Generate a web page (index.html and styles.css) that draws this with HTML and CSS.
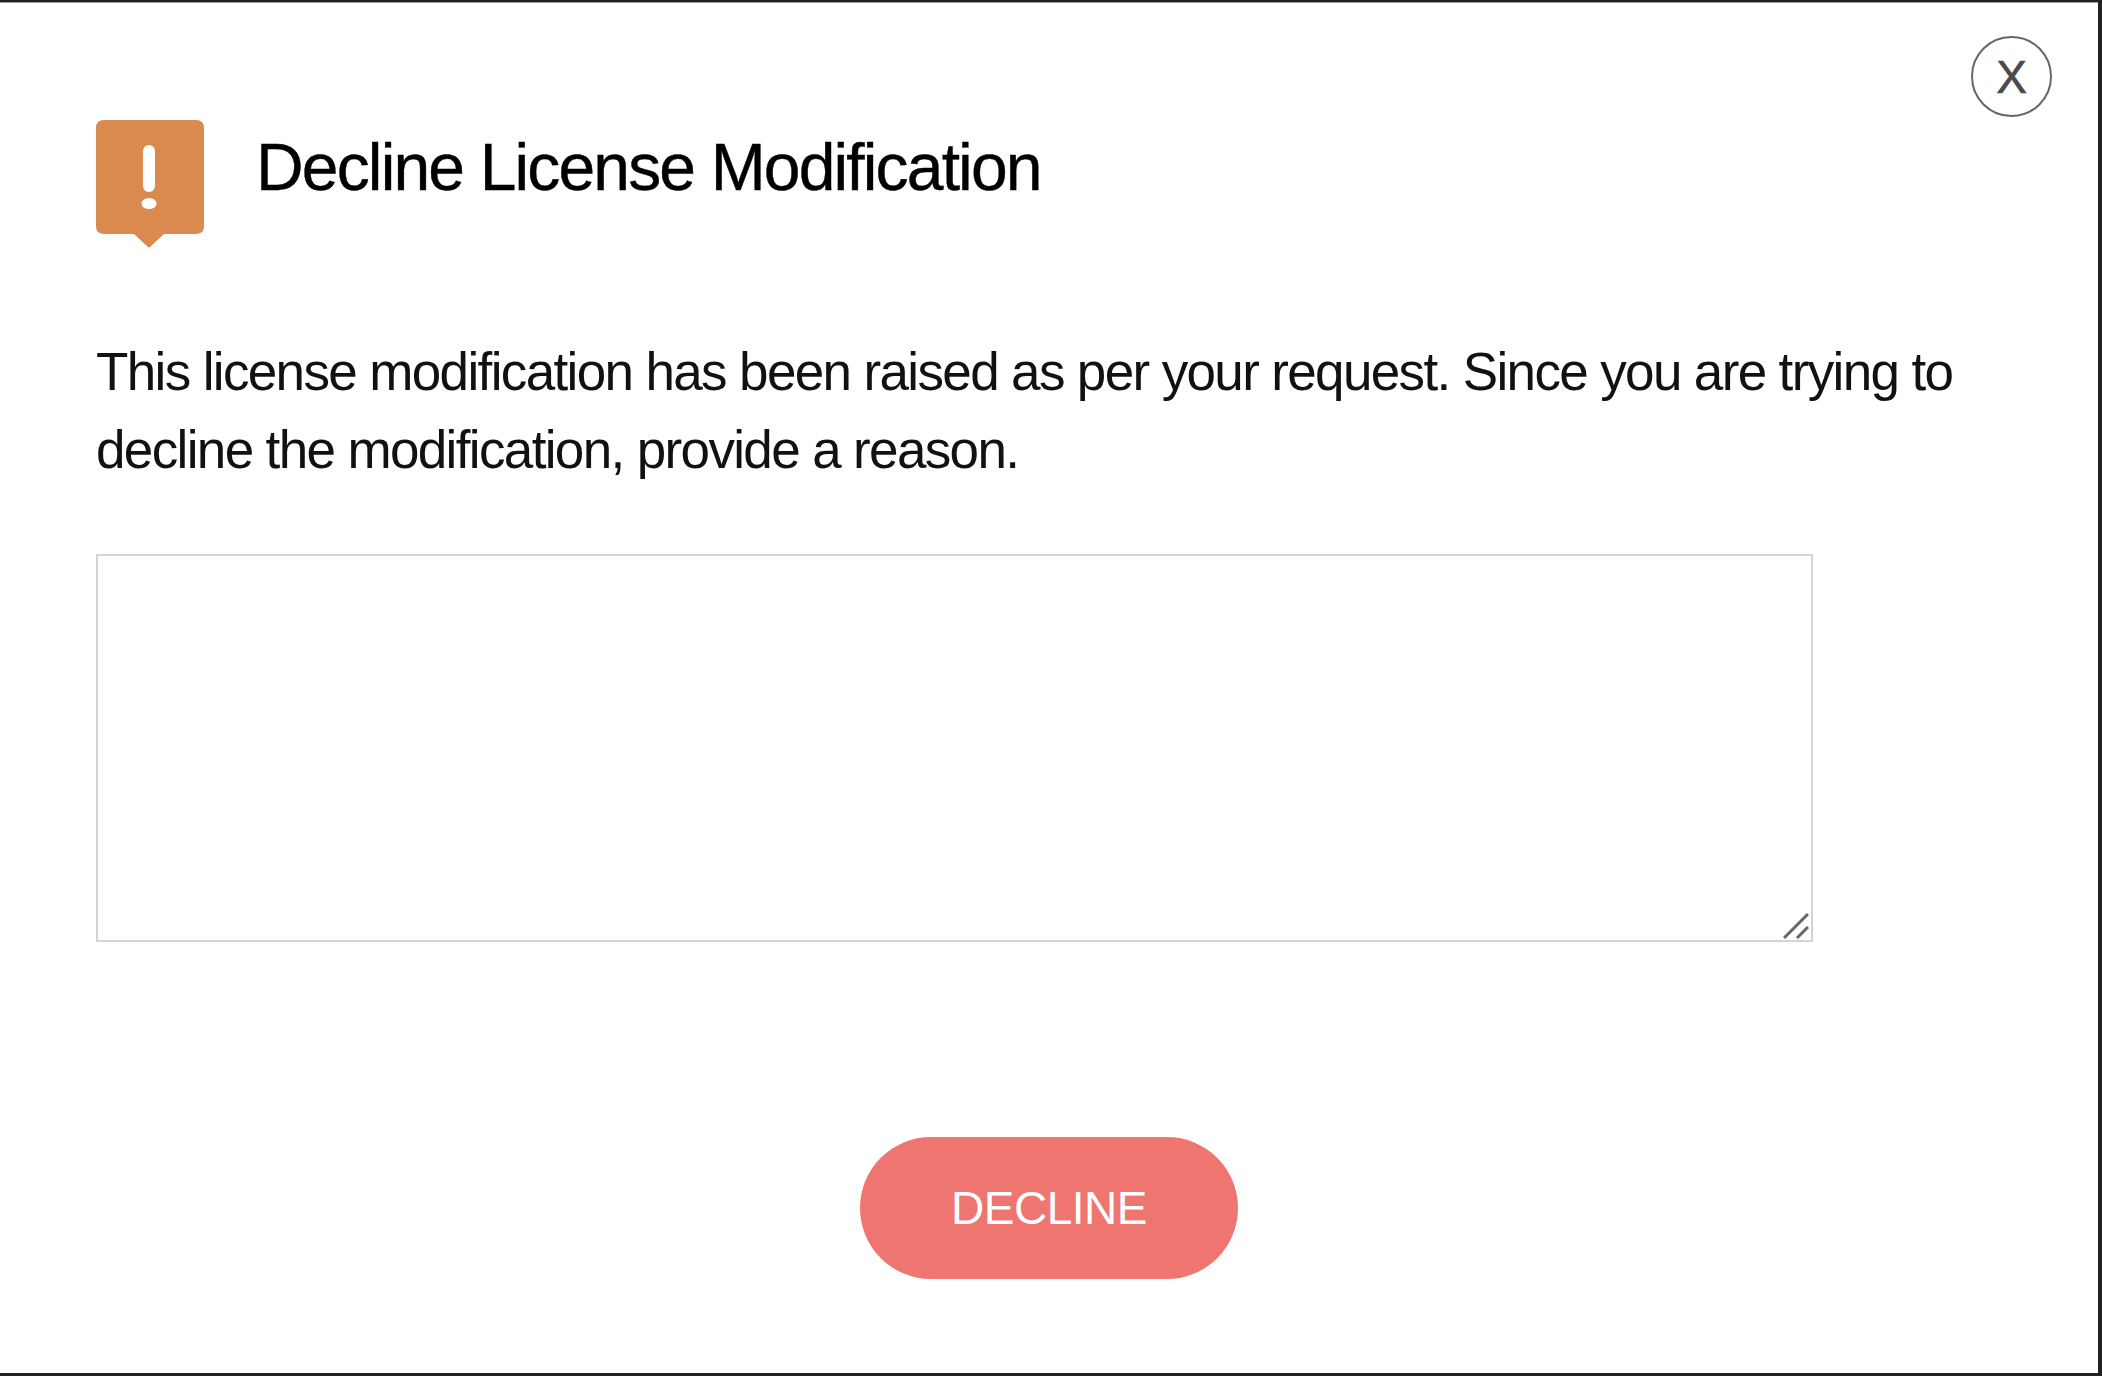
FILE: index.html
```html
<!DOCTYPE html>
<html lang="en">
<head>
	<meta charset="UTF-8">
	<title>Decline License Modification</title>
	<link rel="stylesheet" href="styles.css">
</head>
<body>
	<div class="modal">
		<button class="close" type="button">X</button>
		<div class="head">
			<svg class="alert" width="108" height="128" viewBox="0 0 108 128">
				<path d="M8 0H100Q108 0 108 8V106Q108 114 100 114H68L54 127Q53 128 52 127L38 114H8Q0 114 0 106V8Q0 0 8 0Z" fill="#da8a4e"/>
				<rect x="47" y="25" width="12" height="47" rx="6" fill="#fff"/>
				<ellipse cx="53" cy="83.500" rx="7.500" ry="5.500" fill="#fff"/>
			</svg>
			<h3>Decline License Modification</h3>
		</div>
		<p class="msg">This license modification has been raised as per your request. Since you are trying to decline the modification, provide a reason.</p>
		<div class="reason-box">
			<textarea class="reason"></textarea>
			<svg class="grip" width="26" height="26" viewBox="0 0 26 26">
				<path d="M1 25L25 1M14 25L25 14" stroke="#666" stroke-width="3" fill="none"/>
			</svg>
		</div>
		<div class="actions">
			<button class="decline" type="button">DECLINE</button>
		</div>
	</div>
</body>
</html>
```

FILE: styles.css
```css
html,body{margin:0;padding:0;}
body{
	width:2102px;
	height:1376px;
	overflow:hidden;
	background:#222;
	font-family:"Liberation Sans",Arial,sans-serif;
}
.modal{
	position:relative;
	box-sizing:border-box;
	width:2098px;
	height:1371px;
	margin-top:2px;
	padding:117px 96px 0;
	border-top:1px solid #999;
	background:#fff;
}
.close{
	position:absolute;
	top:33px;
	left:1971px;
	width:81px;
	height:81px;
	padding:0;
	border:2px solid #666;
	border-radius:50%;
	background:#fff;
	color:#4a4a4a;
	font:46px "Liberation Sans",Arial,sans-serif;
	-webkit-text-stroke:.6px #4a4a4a;
}
.head{
	display:flex;
	align-items:flex-start;
	gap:52px;
}
.alert{
	display:block;
	flex:none;
}
h3{
	margin:9px 0 0;
	font-size:66px;
	line-height:76px;
	font-weight:400;
	color:#000;
	letter-spacing:-1.85px;
	-webkit-text-stroke:.4px #000;
}
.msg{
	width:1900px;
	margin:85px 0 0;
	font-size:53px;
	line-height:78px;
	color:#111;
	letter-spacing:-1.64px;
}
.reason-box{
	position:relative;
	width:1717px;
	margin-top:65px;
}
.reason{
	display:block;
	box-sizing:border-box;
	width:1717px;
	height:388px;
	margin:0;
	border:2px solid #d4d4d4;
	background:#fff;
	resize:none;
}
.grip{
	position:absolute;
	right:4px;
	bottom:3px;
}
.actions{
	display:flex;
	justify-content:center;
	width:1906px;
	margin-top:195px;
}
.decline{
	width:378px;
	height:142px;
	padding:0;
	border:0;
	border-radius:71px;
	background:#ee7570;
	color:#fff;
	font:46px "Liberation Sans",Arial,sans-serif;
	letter-spacing:-.5px;
}
```
